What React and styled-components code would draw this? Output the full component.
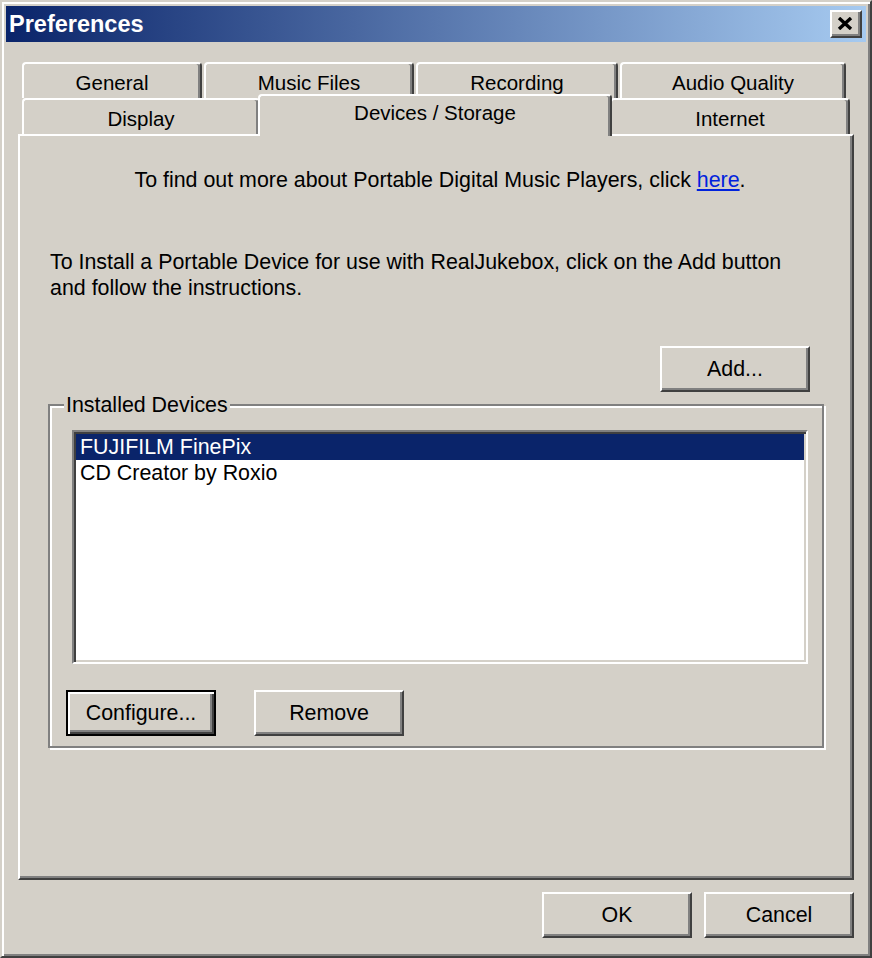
import styled, { createGlobalStyle } from "styled-components";

const GlobalStyle = createGlobalStyle`
  body {
    margin: 0;
    background: #d4d0c8;
    font-family: "Liberation Sans", Arial, sans-serif;
    font-size: 21.4px;
    color: #000;
  }
`;

const Window = styled.div`
  width: 872px;
  height: 958px;
  box-sizing: border-box;
  background: #d4d0c8;
  border: 2px solid;
  border-color: #d4d0c8 #404040 #404040 #d4d0c8;
  box-shadow: inset 2px 2px 0 #fff, inset -2px -2px 0 #808080;
  padding: 4px;
  display: flex;
  flex-direction: column;
`;

const TitleBar = styled.div`
  height: 36px;
  flex: none;
  display: flex;
  align-items: center;
  padding-left: 3px;
  background: linear-gradient(to right, #0a246a, #a6caf0);
  color: #fff;
  font-weight: bold;
  font-size: 23.5px;
`;

const CloseButton = styled.div`
  margin-left: auto;
  margin-right: 4px;
  width: 32px;
  height: 28px;
  box-sizing: border-box;
  background: #d4d0c8;
  border-top: 2px solid #fff;
  border-left: 2px solid #fff;
  border-right: 2px solid #404040;
  border-bottom: 2px solid #404040;
  box-shadow: inset -2px -2px 0 #808080;
  display: flex;
  align-items: center;
  justify-content: center;
  padding: 0 2px 2px 0;
`;

const Body = styled.div`
  flex: 1;
  display: flex;
  flex-direction: column;
  padding: 20px 12px 14px;
`;

const TabStrip = styled.div`
  position: relative;
  z-index: 1;
  height: 72px;
  display: flex;
  flex-direction: column;
  font-size: 20.5px;
`;

const TabRow = styled.div`
  display: flex;
  gap: ${p => p.$gap}px;
  padding-left: 4px;
`;

const Tab = styled.div`
  box-sizing: border-box;
  width: ${p => p.$w}px;
  height: ${p => (p.$selected ? 42 : 36)}px;
  margin: ${p => (p.$selected ? "-4px -2px 0" : "0")};
  position: relative;
  z-index: ${p => (p.$selected ? 2 : 1)};
  background: #d4d0c8;
  border-top: 2px solid #fff;
  border-left: 2px solid #fff;
  border-right: 2px solid #404040;
  border-radius: 4px 4px 0 0;
  box-shadow: inset -2px 0 0 #808080;
  text-align: center;
  padding-top: ${p => (p.$selected ? 0 : 3)}px;
  line-height: ${p => (p.$selected ? 34 : 32)}px;
  white-space: nowrap;
`;

const Panel = styled.div`
  flex: 1;
  display: flex;
  flex-direction: column;
  border-top: 2px solid #fff;
  border-left: 2px solid #fff;
  border-right: 2px solid #404040;
  border-bottom: 2px solid #404040;
  box-shadow: inset -2px -2px 0 #808080;
`;

const InfoLine = styled.div`
  margin-top: 31px;
  padding-left: 8px;
  line-height: 26px;
  text-align: center;

  a {
    color: #0022dd;
    text-decoration: underline;
  }
`;

const Paragraph = styled.div`
  margin-top: 56px;
  padding-left: 30px;
  line-height: 26px;
`;

const Button = styled.div`
  box-sizing: border-box;
  width: 150px;
  height: 46px;
  flex: none;
  background: #d4d0c8;
  display: flex;
  align-items: center;
  justify-content: center;
  ${p =>
    p.$default
      ? `border: 2px solid #000;
         box-shadow: inset 2px 2px 0 #fff, inset -2px -2px 0 #404040, inset -4px -4px 0 #808080;`
      : `border-top: 2px solid #fff;
         border-left: 2px solid #fff;
         border-right: 2px solid #404040;
         border-bottom: 2px solid #404040;
         box-shadow: inset -2px -2px 0 #808080;`}
`;

const AddButton = styled(Button)`
  align-self: flex-end;
  margin-top: 45px;
  margin-right: 42px;
`;

const GroupBox = styled.fieldset`
  margin: 0 28px;
  min-width: 0;
  padding: 12px 14px 10px 22px;
  border: 2px solid #808080;
  box-shadow: inset 2px 2px 0 #fff, 2px 2px 0 #fff;
`;

const GroupLabel = styled.legend`
  margin-left: -8px;
  padding: 0 2px;
  line-height: 26px;
  background: #d4d0c8;
`;

const ListBox = styled.div`
  height: 234px;
  box-sizing: border-box;
  background: #fff;
  border-top: 2px solid #808080;
  border-left: 2px solid #808080;
  border-right: 2px solid #fff;
  border-bottom: 2px solid #fff;
  box-shadow: inset 2px 2px 0 #404040, inset -2px -2px 0 #d4d0c8;
  padding: 2px;
`;

const ListItem = styled.div`
  height: 26px;
  line-height: 26px;
  padding-left: 4px;
  background: ${p => (p.$selected ? "#0a246a" : "transparent")};
  color: ${p => (p.$selected ? "#fff" : "#000")};
`;

const ButtonRow = styled.div`
  display: flex;
  gap: 38px;
  margin-top: 26px;
  margin-left: -6px;
`;

const Footer = styled.div`
  display: flex;
  justify-content: flex-end;
  gap: 12px;
  margin-top: 12px;
`;

export default function App() {
  return (
    <>
      <GlobalStyle />
      <Window>
        <TitleBar>
          Preferences
          <CloseButton>
            <svg width="16" height="13" viewBox="0 0 16 13">
              <path d="M2 1 L14 12 M14 1 L2 12" stroke="#000" strokeWidth="3.4" />
            </svg>
          </CloseButton>
        </TitleBar>
        <Body>
          <TabStrip>
            <TabRow $gap={2}>
              <Tab $w={180}>General</Tab>
              <Tab $w={210}>Music Files</Tab>
              <Tab $w={202}>Recording</Tab>
              <Tab $w={226}>Audio Quality</Tab>
            </TabRow>
            <TabRow $gap={0}>
              <Tab $w={238}>Display</Tab>
              <Tab $w={354} $selected>Devices / Storage</Tab>
              <Tab $w={240}>Internet</Tab>
            </TabRow>
          </TabStrip>
          <Panel>
            <InfoLine>
              To find out more about Portable Digital Music Players, click <a href="#">here</a>.
            </InfoLine>
            <Paragraph>
              To Install a Portable Device for use with RealJukebox, click on the Add button
              <br />
              and follow the instructions.
            </Paragraph>
            <AddButton>Add...</AddButton>
            <GroupBox>
              <GroupLabel>Installed Devices</GroupLabel>
              <ListBox>
                <ListItem $selected>FUJIFILM FinePix</ListItem>
                <ListItem>CD Creator by Roxio</ListItem>
              </ListBox>
              <ButtonRow>
                <Button $default>Configure...</Button>
                <Button>Remove</Button>
              </ButtonRow>
            </GroupBox>
          </Panel>
          <Footer>
            <Button>OK</Button>
            <Button>Cancel</Button>
          </Footer>
        </Body>
      </Window>
    </>
  );
}
